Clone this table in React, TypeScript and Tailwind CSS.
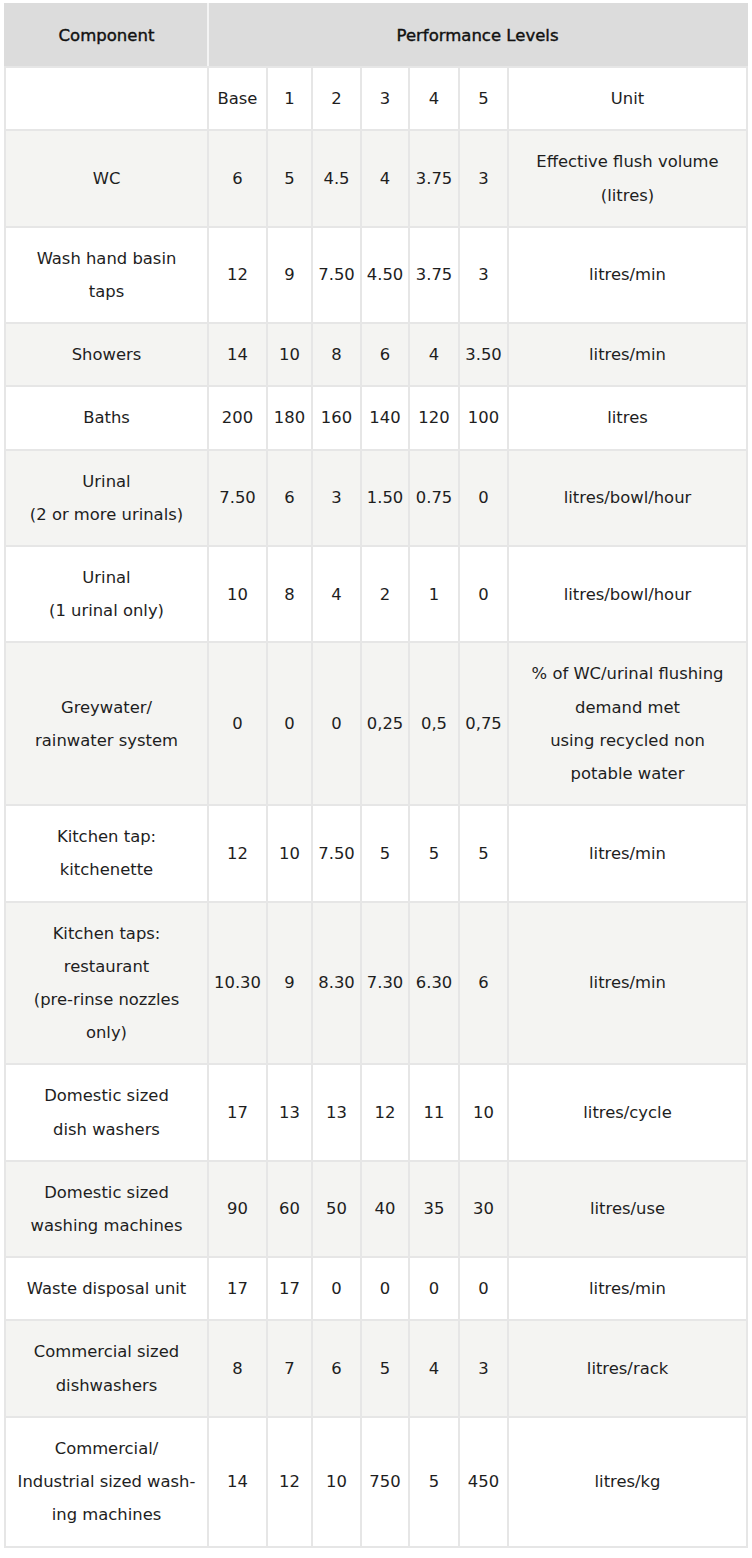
import React from "react";

type Row = {
  name: React.ReactNode;
  values: string[];
  unit: React.ReactNode;
};

const rows: Row[] = [
  { name: "WC", values: ["6", "5", "4.5", "4", "3.75", "3"], unit: <>Effective flush volume<br />(litres)</> },
  { name: <>Wash hand basin<br />taps</>, values: ["12", "9", "7.50", "4.50", "3.75", "3"], unit: "litres/min" },
  { name: "Showers", values: ["14", "10", "8", "6", "4", "3.50"], unit: "litres/min" },
  { name: "Baths", values: ["200", "180", "160", "140", "120", "100"], unit: "litres" },
  { name: <>Urinal<br />(2 or more urinals)</>, values: ["7.50", "6", "3", "1.50", "0.75", "0"], unit: "litres/bowl/hour" },
  { name: <>Urinal<br />(1 urinal only)</>, values: ["10", "8", "4", "2", "1", "0"], unit: "litres/bowl/hour" },
  {
    name: <>Greywater/<br />rainwater system</>,
    values: ["0", "0", "0", "0,25", "0,5", "0,75"],
    unit: <>% of WC/urinal flushing<br />demand met<br />using recycled non<br />potable water</>,
  },
  { name: <>Kitchen tap:<br />kitchenette</>, values: ["12", "10", "7.50", "5", "5", "5"], unit: "litres/min" },
  {
    name: <>Kitchen taps:<br />restaurant<br />(pre-rinse nozzles<br />only)</>,
    values: ["10.30", "9", "8.30", "7.30", "6.30", "6"],
    unit: "litres/min",
  },
  { name: <>Domestic sized<br />dish washers</>, values: ["17", "13", "13", "12", "11", "10"], unit: "litres/cycle" },
  { name: <>Domestic sized<br />washing machines</>, values: ["90", "60", "50", "40", "35", "30"], unit: "litres/use" },
  { name: "Waste disposal unit", values: ["17", "17", "0", "0", "0", "0"], unit: "litres/min" },
  { name: <>Commercial sized<br />dishwashers</>, values: ["8", "7", "6", "5", "4", "3"], unit: "litres/rack" },
  {
    name: <>Commercial/<br />Industrial sized wash-<br />ing machines</>,
    values: ["14", "12", "10", "750", "5", "450"],
    unit: "litres/kg",
  },
];

const cell = "border-2 border-[#e6e6e6] px-1 py-[14px] text-center align-middle leading-[33.2px]";

export default function App() {
  return (
    <div className="min-h-[1558px] bg-white pl-[4px] pt-[3px] text-[16.4px] text-[#1e1e1e] [font-family:'DejaVu_Sans',sans-serif]">
      <table className="w-[742px] table-fixed border-collapse">
        <colgroup>
          <col className="w-[203px]" />
          <col className="w-[59px]" />
          <col className="w-[45px]" />
          <col className="w-[49px]" />
          <col className="w-[48px]" />
          <col className="w-[50px]" />
          <col className="w-[49px]" />
          <col className="w-[239px]" />
        </colgroup>
        <thead>
          {/* header weight sits between book and bold */}
          <tr className="bg-[#dcdcdc] text-[16.5px] font-normal text-[#111] [-webkit-text-stroke:0.4px_#111]">
            <th className={`${cell} border-x-[#dcdcdc] border-t-[#dcdcdc] border-r-[#f4f4f4] font-normal`}>Component</th>
            <th colSpan={7} className={`${cell} border-t-[#dcdcdc] border-r-[#dcdcdc] font-normal`}>
              Performance Levels
            </th>
          </tr>
        </thead>
        <tbody>
          <tr className="bg-white">
            <td className={cell}></td>
            <td className={cell}>Base</td>
            <td className={cell}>1</td>
            <td className={cell}>2</td>
            <td className={cell}>3</td>
            <td className={cell}>4</td>
            <td className={cell}>5</td>
            <td className={cell}>Unit</td>
          </tr>
          {rows.map((r, i) => (
            <tr key={i} className={i % 2 === 0 ? "bg-[#f4f4f2]" : "bg-white"}>
              <td className={cell}>{r.name}</td>
              {r.values.map((v, j) => (
                <td key={j} className={`${cell} px-0`}>
                  {v}
                </td>
              ))}
              <td className={cell}>{r.unit}</td>
            </tr>
          ))}
        </tbody>
      </table>
    </div>
  );
}
